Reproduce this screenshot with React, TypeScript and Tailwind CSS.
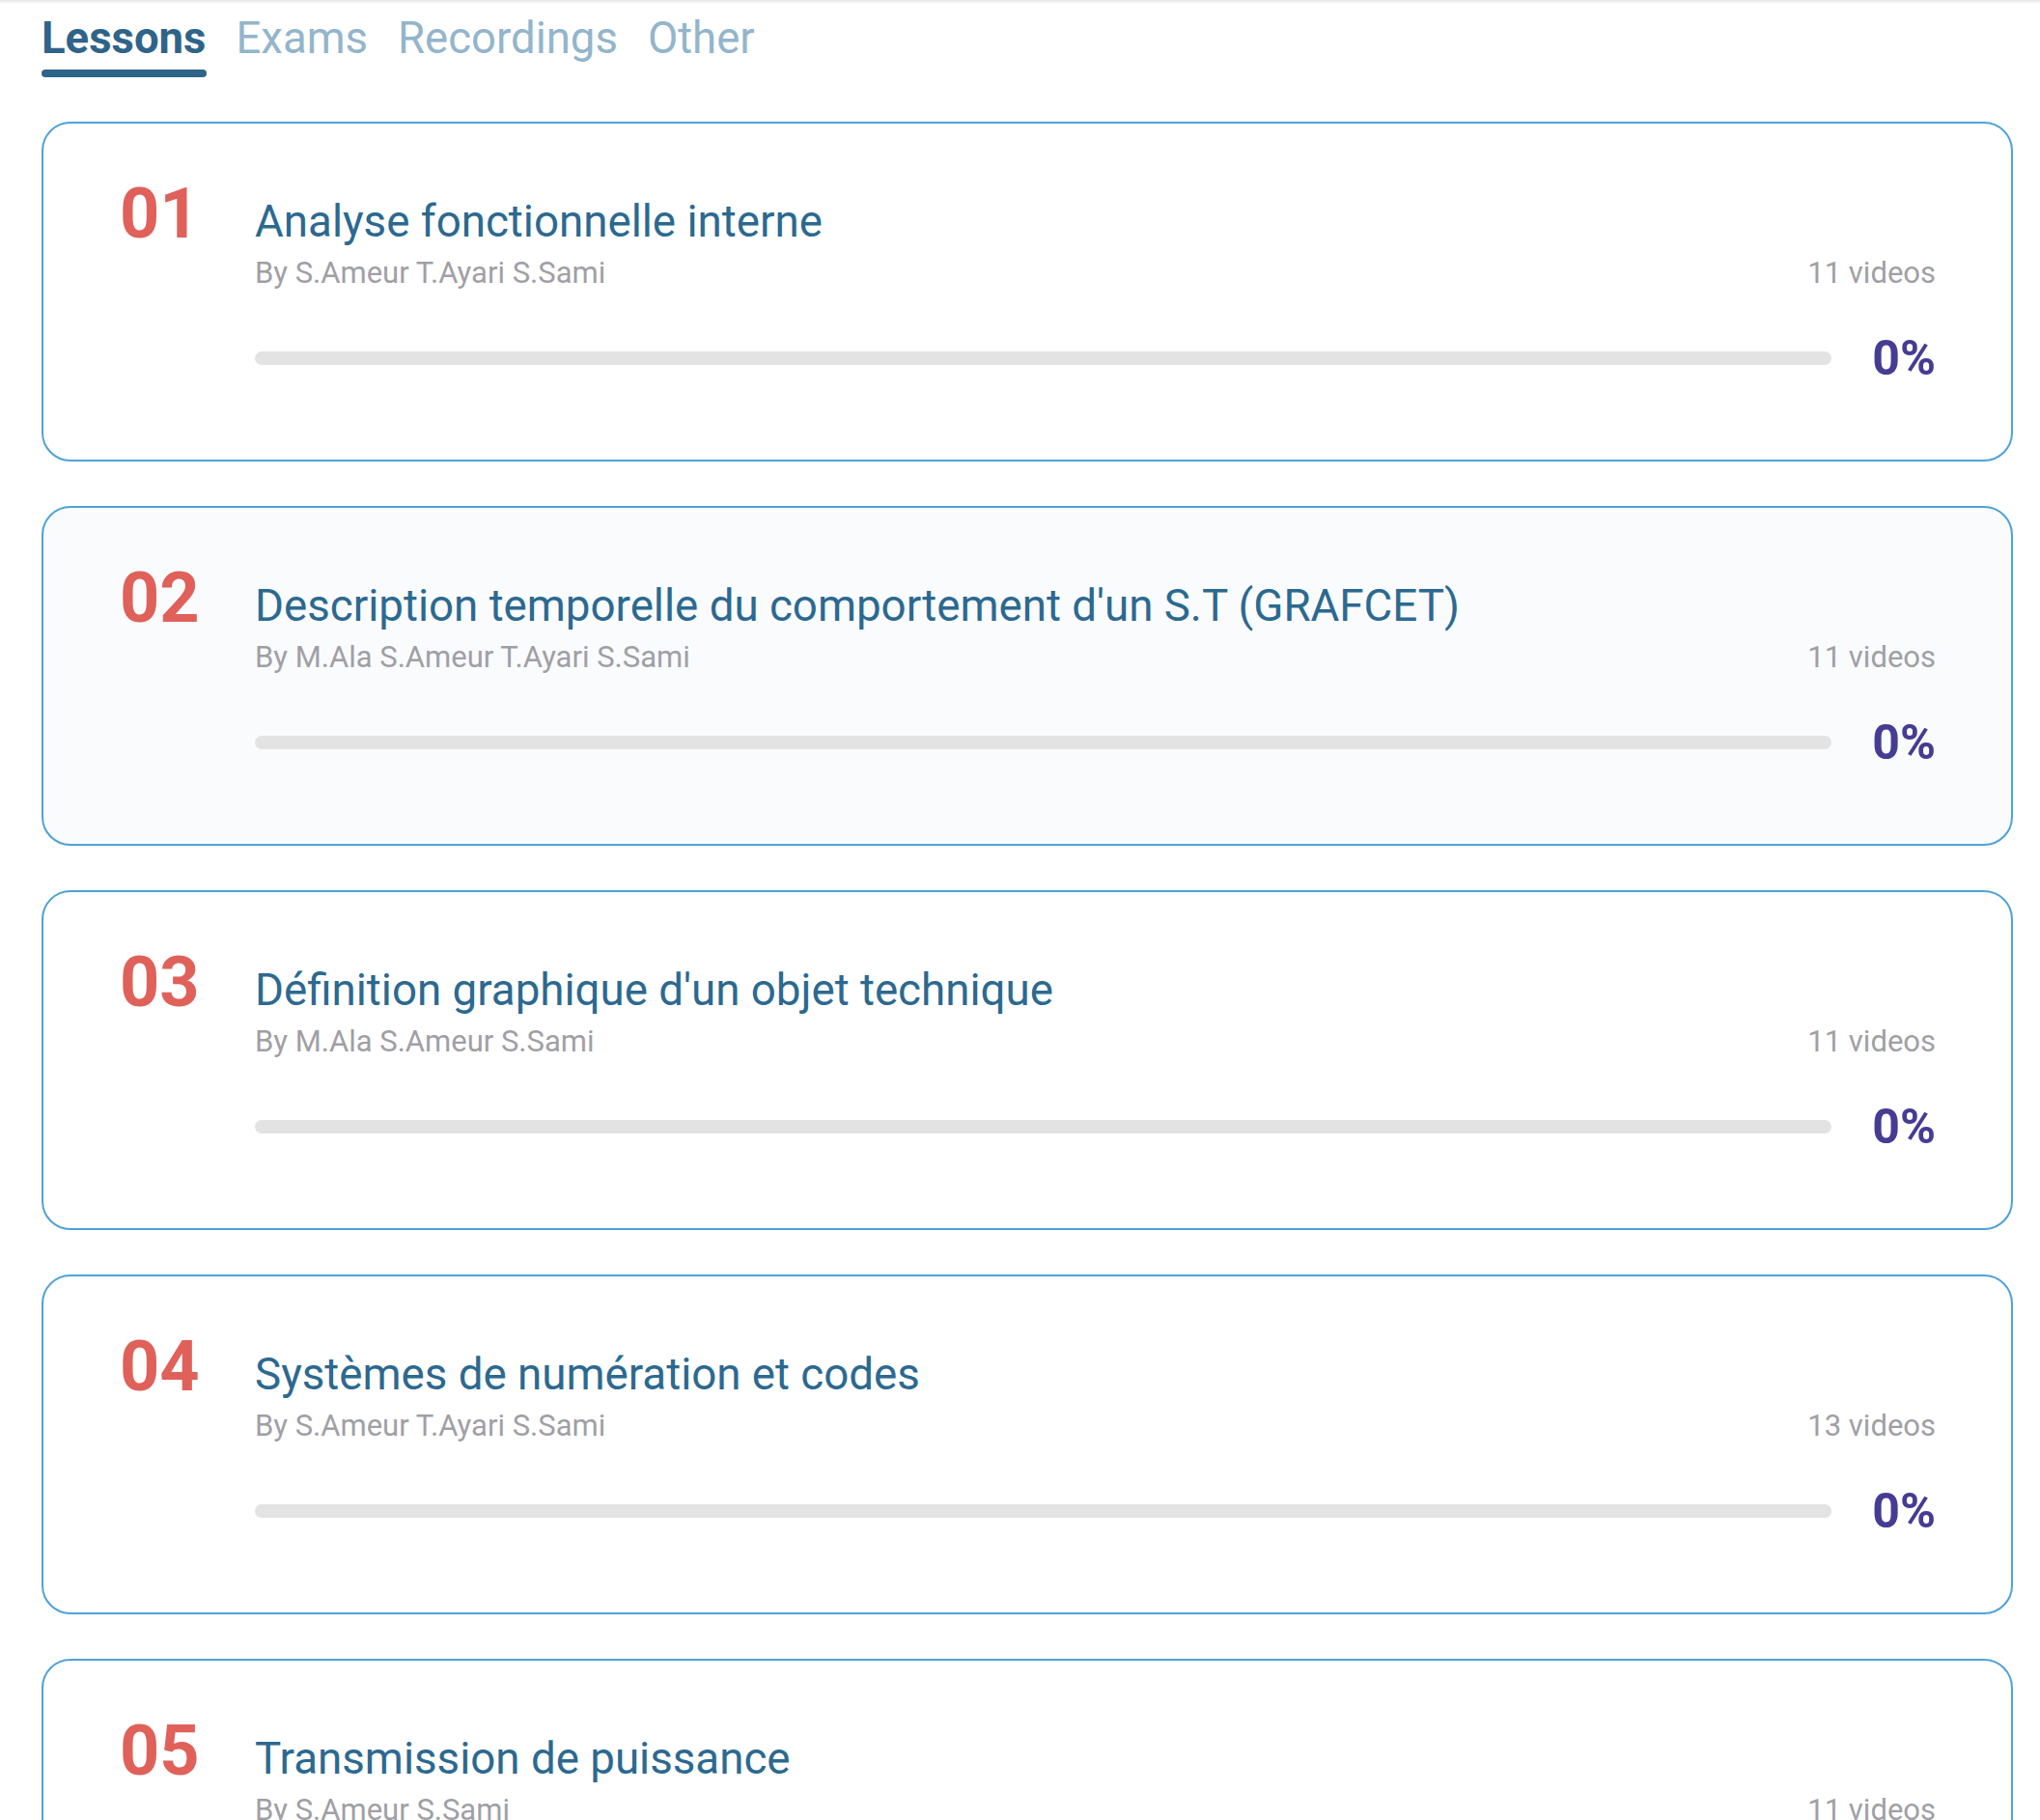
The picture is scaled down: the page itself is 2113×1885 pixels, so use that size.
import { useState } from 'react';

type Lesson = {
  id: number;
  title: string;
  authors: string;
  videos: number;
  progress: number;
};

const lessons: Lesson[] = [
  { id: 1, title: 'Analyse fonctionnelle interne', authors: 'S.Ameur T.Ayari S.Sami', videos: 11, progress: 0 },
  { id: 2, title: "Description temporelle du comportement d'un S.T (GRAFCET)", authors: 'M.Ala S.Ameur T.Ayari S.Sami', videos: 11, progress: 0 },
  { id: 3, title: "Définition graphique d'un objet technique", authors: 'M.Ala S.Ameur S.Sami', videos: 11, progress: 0 },
  { id: 4, title: 'Systèmes de numération et codes', authors: 'S.Ameur T.Ayari S.Sami', videos: 13, progress: 0 },
  { id: 5, title: 'Transmission de puissance', authors: 'S.Ameur S.Sami', videos: 11, progress: 0 },
];

const tabs = ['Lessons', 'Exams', 'Recordings', 'Other'];

function LessonCard({ lesson, highlighted }: { lesson: Lesson; highlighted: boolean }) {
  return (
    <div
      className={`flex items-start rounded-[30px] border-2 border-[#4ea2d9] pl-[79px] pr-[78px] pt-[58px] pb-[80px] ${
        highlighted ? 'bg-[#f9fbfd]' : 'bg-white'
      }`}
    >
      <div className="w-[140px] shrink-0 text-[72px] font-bold leading-[72px] text-[#df615a]">
        {String(lesson.id).padStart(2, '0')}
      </div>

      <div className="mt-[21px] flex min-w-0 flex-1 flex-col">
        <h3 className="text-[45.7px] leading-[46px] font-normal text-[#2c6990]">{lesson.title}</h3>

        <div className="mt-[14px] flex items-baseline justify-between text-[31px] leading-[31px] text-[#a09fa6]">
          <span>By {lesson.authors}</span>
          <span>{lesson.videos} videos</span>
        </div>

        <div className="mt-[48px] flex h-[50px] items-center gap-[42px]">
          <div className="h-[14px] flex-1 overflow-hidden rounded-full bg-[#e3e3e3]">
            <div className="h-full rounded-full bg-[#453c94]" style={{ width: `${lesson.progress}%` }} />
          </div>
          <span className="text-[50px] leading-[50px] font-bold text-[#453c94]">{lesson.progress}%</span>
        </div>
      </div>
    </div>
  );
}

export default function App() {
  const [activeTab, setActiveTab] = useState('Lessons');

  return (
    <div className="min-h-screen bg-white font-['Roboto',_'Liberation_Sans',_sans-serif]">
      <div className="h-[4px] bg-linear-to-b from-[#e6e6e6] to-white" />

      <div className="pl-[43px] pr-[28px]">
        <div className="mt-[13px] flex items-start gap-[31px]">
          {tabs.map((tab) => {
            const active = tab === activeTab;
            return (
              <button
                key={tab}
                onClick={() => setActiveTab(tab)}
                className={`flex flex-col text-[45.5px] leading-[46px] ${
                  active ? 'font-bold text-[#2f6489]' : 'font-normal text-[#93b5cb]'
                }`}
              >
                <span>{tab}</span>
                {active && <span className="mt-[9px] h-[8px] w-full rounded-full bg-[#2f6489]" />}
              </button>
            );
          })}
        </div>

        {/* lesson list */}
        <div className="mt-[46px] flex flex-col gap-[46px] pb-[60px]">
          {lessons.map((lesson) => (
            <LessonCard key={lesson.id} lesson={lesson} highlighted={lesson.id === 2} />
          ))}
        </div>
      </div>
    </div>
  );
}
